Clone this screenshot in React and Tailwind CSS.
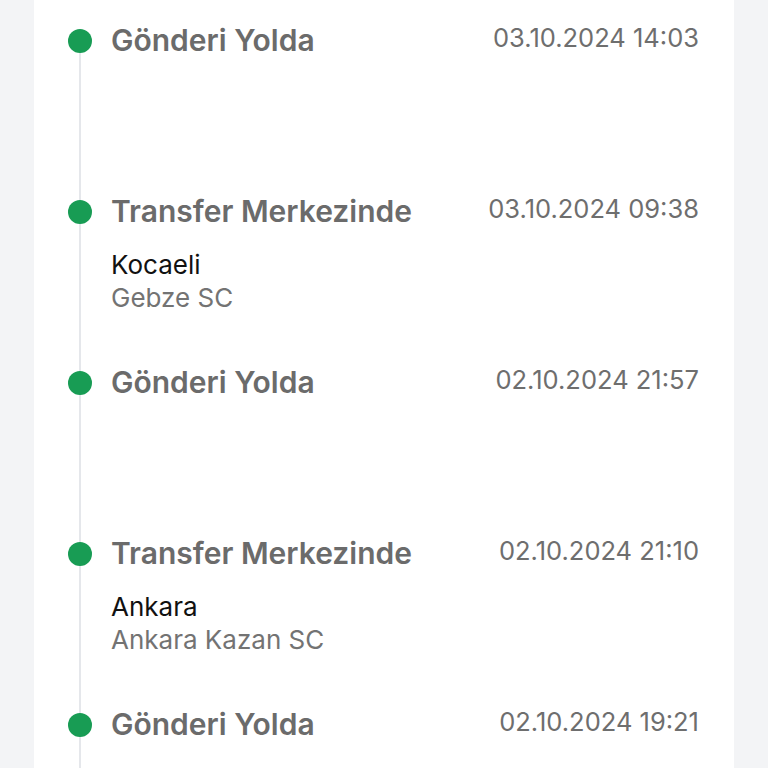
import React from "react";

const items = [
  { title: "Gönderi Yolda", date: "03.10.2024 14:03" },
  { title: "Transfer Merkezinde", date: "03.10.2024 09:38", city: "Kocaeli", center: "Gebze SC" },
  { title: "Gönderi Yolda", date: "02.10.2024 21:57" },
  { title: "Transfer Merkezinde", date: "02.10.2024 21:10", city: "Ankara", center: "Ankara Kazan SC" },
  { title: "Gönderi Yolda", date: "02.10.2024 19:21" },
];

export default function App() {
  return (
    <div className="h-[768px] overflow-hidden bg-[#f3f4f6] px-[34px] font-['Inter',sans-serif]">
      <div className="relative h-full bg-white pl-[34px] pr-[35px] pt-[23px]">
        <div className="absolute left-[45px] top-[41px] bottom-0 w-[2px] bg-[#e5e7eb]" />
        {items.map((it, i) => (
          <div key={i} className="flex h-[171px]">
            <div className="relative flex h-[36px] w-6 shrink-0 items-center">
              <div className="h-6 w-6 rounded-full bg-[#189c54]" />
            </div>
            <div className="ml-[19px] flex-1">
              <div className="flex items-start justify-between">
                <span className="text-[30px] font-semibold leading-[34px] text-[#6b6b6b]">{it.title}</span>
                <span className="text-[25.5px] leading-[30px] text-[#6e6e6e]">{it.date}</span>
              </div>
              {it.city && (
                <div className="mt-[20px]">
                  <div className="text-[26px] leading-[33px] text-[#111111]">{it.city}</div>
                  <div className="text-[26px] leading-[33px] text-[#737373]">{it.center}</div>
                </div>
              )}
            </div>
          </div>
        ))}
      </div>
    </div>
  );
}
